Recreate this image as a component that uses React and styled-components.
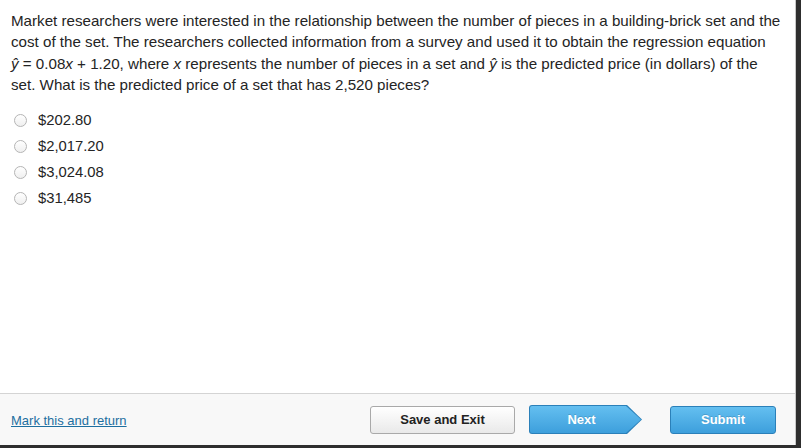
import React from "react";
import styled, { createGlobalStyle } from "styled-components";

const GlobalStyle = createGlobalStyle`
  html, body {
    margin: 0;
    padding: 0;
    background: #2e2e2e;
  }
  body {
    font-family: "Liberation Sans", Arial, sans-serif;
  }
`;

const Frame = styled.div`
  width: 796px;
  height: 445px;
  background: #ffffff;
  display: flex;
  flex-direction: column;
  border-right: 1px solid #c8c8c8;
  box-sizing: border-box;
`;

const Content = styled.div`
  flex: 1;
  padding: 10px 11px 0 11px;
`;

const Question = styled.p`
  margin: 0;
  font-size: 15.15px;
  line-height: 21.3px;
  color: #242424;
  white-space: nowrap;
`;

const Options = styled.div`
  margin-top: 12px;
  display: flex;
  flex-direction: column;
`;

const Option = styled.label`
  display: flex;
  align-items: center;
  height: 26px;
  font-size: 14.8px;
  color: #242424;
  cursor: pointer;
`;

const Radio = styled.span`
  width: 13px;
  height: 13px;
  margin-left: 3px;
  margin-right: 11px;
  border-radius: 50%;
  border: 1px solid #b5b5b5;
  background: linear-gradient(#ffffff, #efefef);
  box-sizing: border-box;
`;

const Footer = styled.div`
  height: 52px;
  border-top: 1px solid #d4d4d4;
  background: #f8f8f8;
  display: flex;
  align-items: center;
  padding: 0 11px;
  box-sizing: border-box;
`;

const MarkLink = styled.a`
  font-size: 13px;
  color: #1d6fa0;
  text-decoration: underline;
  margin-right: auto;
  margin-top: 2px;
`;

const SaveButton = styled.button`
  width: 145px;
  height: 28px;
  border: 1px solid #a9a9a9;
  border-radius: 3px;
  background: linear-gradient(#ffffff, #e9e9e9);
  font-family: "Liberation Sans", Arial, sans-serif;
  font-weight: bold;
  font-size: 13px;
  color: #222;
  margin-right: 14px;
`;

const arrowShape = "polygon(0 0, calc(100% - 15px) 0, 100% 50%, calc(100% - 15px) 100%, 0 100%)";

const NextOuter = styled.div`
  width: 113px;
  height: 29px;
  background: #2b80b9;
  clip-path: ${arrowShape};
  border-radius: 3px 0 0 3px;
  padding: 1px;
  box-sizing: border-box;
  margin-right: 28px;
`;

const NextInner = styled.button`
  width: 100%;
  height: 100%;
  border: none;
  clip-path: ${arrowShape};
  border-radius: 2px 0 0 2px;
  background: linear-gradient(#64bff0, #3d9fdc);
  font-family: "Liberation Sans", Arial, sans-serif;
  font-weight: bold;
  font-size: 13px;
  color: #fff;
  padding-right: 14px;
  text-shadow: 0 -1px 0 rgba(0, 0, 0, 0.15);
`;

const SubmitButton = styled.button`
  width: 106px;
  height: 28px;
  border: 1px solid #2b80b9;
  border-radius: 3px;
  background: linear-gradient(#64bff0, #3d9fdc);
  font-family: "Liberation Sans", Arial, sans-serif;
  font-weight: bold;
  font-size: 13px;
  color: #fff;
  margin-right: 8px;
  text-shadow: 0 -1px 0 rgba(0, 0, 0, 0.15);
`;

const options = ["$202.80", "$2,017.20", "$3,024.08", "$31,485"];

export default function App() {
  return (
    <>
      <GlobalStyle />
      <Frame>
        <Content>
          <Question>
            Market researchers were interested in the relationship between the number of pieces in a
            building-brick set and the
            <br />
            cost of the set. The researchers collected information from a survey and used it to obtain
            the regression equation
            <br />
            <i>ŷ</i> = 0.08<i>x</i> + 1.20, where <i>x</i> represents the number of pieces in a set and{" "}
            <i>ŷ</i> is the predicted price (in dollars) of the
            <br />
            set. What is the predicted price of a set that has 2,520 pieces?
          </Question>
          <Options>
            {options.map((o) => (
              <Option key={o}>
                <Radio />
                {o}
              </Option>
            ))}
          </Options>
        </Content>
        <Footer>
          <MarkLink href="#">Mark this and return</MarkLink>
          <SaveButton>Save and Exit</SaveButton>
          <NextOuter>
            <NextInner>Next</NextInner>
          </NextOuter>
          <SubmitButton>Submit</SubmitButton>
        </Footer>
      </Frame>
    </>
  );
}
